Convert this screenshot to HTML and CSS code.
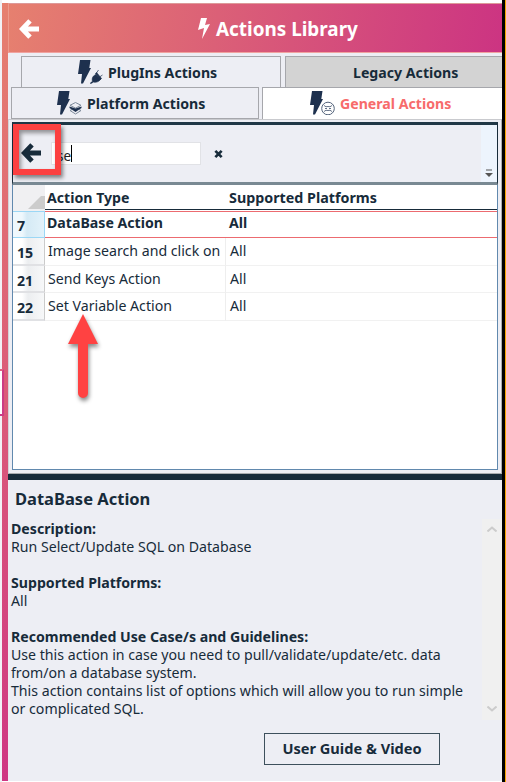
FILE: index.html
```
<!DOCTYPE html>
<html lang="en">
<head>
<meta charset="utf-8">
<title>Actions Library</title>
<link rel="stylesheet" href="styles.css">
</head>
<body>
<svg class="defs" width="0" height="0">
  <symbol id="bolt" viewBox="0 0 13 24"><path d="M2 0h10.500l-1.200 8H13L5 23.500H3L4 14H0z"/></symbol>
  <symbol id="back" viewBox="0 0 20 20"><path d="M11 1.800 3.200 10l7.800 8.200M4 10h16" fill="none" stroke="currentColor" stroke-width="4.800"/></symbol>
</svg>
<div class="window">
  <div class="rail"></div>
  <main class="panel">
    <header class="title-bar">
      <svg class="title-back"><use href="#back"/></svg>
      <svg class="title-bolt" viewBox="0 0 12 21"><path d="M3 0h6L7 7l5-1L4 21l2-11-6 2z"/></svg>
      <h1>Actions Library</h1>
    </header>
    <nav class="tabs upper">
      <div class="tab plugins">
        <svg class="tab-icon" viewBox="0 0 25 24"><use href="#bolt" width="13" height="24"/><path d="M12.500 23.500c0-1 1-1.500 2-2-1-4 1-6 3.500-7l4.500 5c-2 2.500-4.500 3-7 2.500-1 .5-2 1.500-3 1.500zM17.500 13.500l1-1 5 6-1 1zM18.500 13l2-3M21.500 17l3-2" stroke="#1d304e" stroke-width=".7"/></svg>
        <span>PlugIns Actions</span>
      </div>
      <div class="tab legacy"><span>Legacy Actions</span></div>
    </nav>
    <nav class="tabs lower">
      <div class="tab platform">
        <svg class="tab-icon" viewBox="0 0 25 24"><use href="#bolt" width="13" height="24"/><path d="m18.500 11.500 5.500 2.800-5.500 2.800-5.500-2.800zM13 19.500l5.500 3.500 5.500-3.500-2-1M13 19.500l2-1" fill="none" stroke="#7e8b9b"/><path d="m12.500 15.500 6 2 6-2v1.500l-6 4-6-4z"/></svg>
        <span>Platform Actions</span>
      </div>
      <div class="tab general">
        <svg class="tab-icon" viewBox="0 0 25 24"><use href="#bolt" width="13" height="24"/><circle cx="18" cy="17.500" r="6.300" fill="#fff" stroke="#52627a"/><path d="M14 14.500q2 2 4 1 2 1 4-1M14 20.500q2-2 4-1 2-1 4 1M15 17.500h2m2 0h2" fill="none" stroke="#52627a" stroke-width=".9"/></svg>
        <span>General Actions</span>
      </div>
    </nav>
    <section class="library">
      <div class="toolbar">
        <svg class="tool-back"><use href="#back"/></svg>
        <div class="search"><span>se</span><i class="caret"></i></div>
        <svg class="clear" viewBox="0 0 10 10"><path d="m1.500 1.500 7 7m0-7-7 7" stroke="#172b3a" stroke-width="3"/></svg>
        <div class="overflow"><svg viewBox="0 0 8 8" width="8" height="8"><path d="M1 1h6" stroke="#555"/><path d="M0 4h8L4 8z" fill="#555"/></svg></div>
        <div class="callout-box"></div>
      </div>
      <div class="grid">
        <div class="row head"><div class="num"><i class="corner"></i></div><div class="type">Action Type</div><div class="plat">Supported Platforms</div></div>
        <div class="row selected"><div class="num">7</div><div class="type">DataBase Action</div><div class="plat">All</div></div>
        <div class="row"><div class="num">15</div><div class="type"><span>Image search and click on</span></div><div class="plat">All</div></div>
        <div class="row"><div class="num">21</div><div class="type">Send Keys Action</div><div class="plat">All</div></div>
        <div class="row"><div class="num">22</div><div class="type">Set Variable Action</div><div class="plat">All</div></div>
        <svg class="callout-arrow" viewBox="0 0 40 96"><path d="M20 3 35 33H25V82a5 5 0 0 1-10 0V33H5z" fill="#ff4242"/></svg>
      </div>
    </section>
    <section class="details">
      <h2>DataBase Action</h2>
      <div class="copy">
        <div class="text">
          <p><b>Description:</b></p>
          <p>Run Select/Update SQL on Database</p>
          <p class="gap"><b>Supported Platforms:</b></p>
          <p>All</p>
          <p class="gap"><b>Recommended Use Case/s and Guidelines:</b></p>
          <p>Use this action in case you need to pull/validate/update/etc. data</p>
          <p>from/on a database system.</p>
          <p>This action contains list of options which will allow you to run simple</p>
          <p>or complicated SQL.</p>
        </div>
        <div class="scroll">
          <svg viewBox="0 0 10 6"><path d="m.5 5.500 4.500-4 4.500 4"/></svg>
          <svg viewBox="0 0 10 6"><path d="m.5.5 4.500 4 4.500-4"/></svg>
        </div>
      </div>
      <button class="guide">User Guide &amp; Video</button>
    </section>
  </main>
  <div class="edge"></div>
  <div class="backdrop-box"></div>
</div>
</body>
</html>
```

FILE: styles.css
```
* { box-sizing: border-box; }
body { margin: 0; background: #fff; color: #172b3a; font: 14.15px/18px "Noto Sans", "Open Sans", sans-serif; }
h1, h2, p { margin: 0; white-space: nowrap; }
svg { display: block; flex: none; }
.defs { position: absolute; }
.window { position: relative; display: flex; width: 506px; height: 782px; padding: 3px 0 0 2px; background: linear-gradient(90deg, #f1f2f6 2px, #fff 0); overflow: hidden; }
.window span { white-space: nowrap; }
.rail { width: 6px; background: linear-gradient(#e6806f, #cf3783); height: 778px; }
.panel { width: 494px; height: 778px; background: #edeef4; display: flex; flex-direction: column; }
.edge { width: 4px; margin-top: -3px; background: #000; border-right: 1px solid #f7a600; }
.title-bar { height: 50px; display: flex; align-items: center; color: #fff; background: linear-gradient(98deg, #e6806f, #cc3482); border-top: 1px solid #d99; border-bottom: 1px solid #f0a3a0; border-left: 1px solid #ec9a8c; }
.title-back { width: 20px; height: 20px; margin: 2px 0 0 10px; }
.title-bolt { width: 12px; height: 21px; margin: 1px 0 0 159px; fill: #fff; }
h1 { font-size: 18.9px; line-height: 24px; margin: 2px 0 0 6px; }
.tabs { display: flex; font-weight: 700; }
.tab { display: flex; align-items: center; border: 1px solid #a6a7ac; border-bottom: 0; }
.tab span { padding-top: 1px; }
.tab-icon { width: 25px; height: 24px; margin-top: -1px; fill: #1d304e; }
.upper { margin-top: 3px; height: 31px; padding-left: 13px; gap: 4px; }
.lower { height: 32px; padding-left: 3px; gap: 3px; }
.plugins { width: 260px; padding-left: 56px; gap: 5px; }
.legacy { flex: 1; background: #d3d3d3; border-right: 0; padding-left: 67px; }
.platform { width: 248px; padding-left: 45px; gap: 5px; border-bottom: 1px solid #a6a7ac; }
.general { flex: 1; background: #fff; color: #f76b6b; border-right: 0; padding-left: 47px; gap: 5px; }
.library { height: 355px; border: 1px solid #a9acb0; border-top-color: #c9cace; border-left-color: #d3d4d8; padding: 2px 3px 3px 3px; }
.toolbar { position: relative; height: 63px; display: flex; align-items: center; border: 1px solid #172b3a; border-top: 3px solid #203746; border-bottom: 3px solid #798993; }
.tool-back { width: 20px; height: 20px; margin-left: 8px; margin-top: -2px; }
.search { width: 150px; height: 23px; margin: -1px 0 0 10px; border: 1px solid #e1e2e6; background: #fff; display: flex; align-items: center; padding-left: 5px; color: #222; font-size: 13.500px; }
.search span { padding-top: 6px; }
.caret { width: 1px; height: 17px; background: #000; }
.clear { width: 9px; height: 10px; margin-left: 13px; }
.overflow { margin-left: auto; align-self: stretch; width: 16px; background: #edf4fd; display: flex; align-items: flex-end; justify-content: center; padding: 0 1px 5px 0; }
.callout-box { position: absolute; left: 0; top: -1px; width: 48px; height: 51px; border: 6px solid #fc4040; box-shadow: 2px 3px 4px #0007, inset 2px 3px 4px #0006; }
.grid { position: relative; height: 285px; background: #fff; border: 1px solid #6189ae; border-top: 0; }
.row { display: flex; height: 27.500px; }
.num { width: 32px; height: 100%; padding: 6px 0 0 4px; font-weight: 700; border-right: 1px solid #cbcbcb; border-bottom: 2px solid #e0e1e4; background: linear-gradient(90deg, #fff 0 9px, #eceef0 15px, #f7f8f9); }
.type { width: 181px; height: 100%; padding: 4px 0 0 3px; border-right: 1px solid #eee; border-bottom: 1px solid #f1f1f1; }
.plat { flex: 1; padding: 4px 0 0 4px; border-bottom: 1px solid #f1f1f1; }
.head { height: 26px; font-weight: 700; }
.head .num { border: 0; background: #f0f0f2; padding: 11px 0 0 15px; }
.head .type, .head .plat { border: 0; height: 25px; border-bottom: 1px solid #172b3a; }
.head .plat { font-size: 14.3px; }
.corner { display: block; border-left: 13px solid transparent; border-bottom: 13px solid #ccc; }
.selected { height: 27px; font-weight: 700; }
.selected .num { background: linear-gradient(90deg, #eff8fd 0 9px, #d5eaf5 14px, #e3f2fa); border: 1px solid #9bd7f5; border-left: 0; padding-top: 5px; }
.selected .type, .selected .plat { border: 0; border-top: 1px solid #ec6b70; border-bottom: 1px solid #ec6b70; padding-top: 2px; }
.head .type, .selected .type { padding-left: 2px; }
.head .plat, .selected .plat { padding-left: 3px; }
.callout-arrow { position: absolute; left: 50px; top: 126px; width: 40px; height: 96px; filter: drop-shadow(1px 3px 2px #0007); }
.details { height: 304px; border-top: 6px solid #172b3a; display: flex; flex-direction: column; }
h2 { font-size: 16.500px; line-height: 22px; padding: 8px 0 0 7px; }
.copy { display: flex; justify-content: space-between; height: 201px; margin-top: 9px; }
.text { padding: 1px 0 0 3px; white-space: nowrap; }
.gap { margin-top: 18px; }
.scroll { width: 20px; background: #f0f0f0; display: flex; flex-direction: column; align-items: center; justify-content: space-between; padding: 7px 1px 8px 0; }
.scroll svg { width: 10px; height: 6px; fill: none; stroke: #ccc; stroke-width: 2; }
.guide { width: 176px; height: 32px; margin: 13px 0 0 256px; padding: 0 0 2px; border: 1px solid #3d505c; background: transparent; color: #172b3a; font: 700 14.6px/18px "Noto Sans", sans-serif; }
.backdrop-box { position: absolute; left: 0; top: 369px; width: 4px; height: 47px; border: 2px solid #cb3c85; border-top-color: #df6480; border-left: 0; background: #fff; }
```
